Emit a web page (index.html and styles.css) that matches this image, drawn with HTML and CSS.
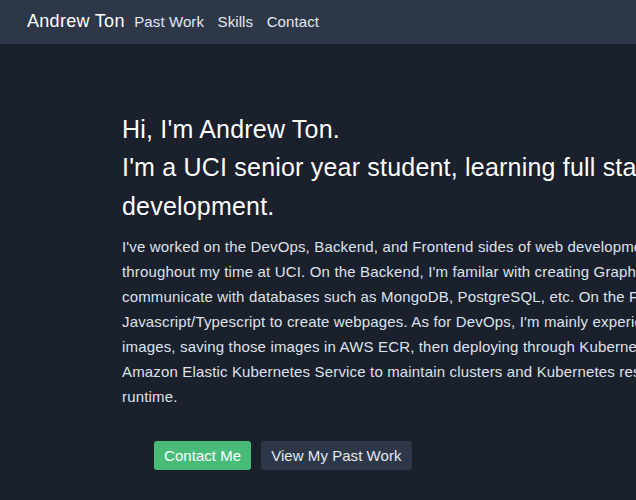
FILE: index.html
```html
<!DOCTYPE html>
<html lang="en">
<head>
<meta charset="utf-8">
<title>Andrew Ton</title>
<link rel="stylesheet" href="styles.css">
</head>
<body>
<nav class="navbar">
  <a class="brand" href="#">Andrew Ton</a>
  <a class="nav-link" href="#">Past Work</a>
  <a class="nav-link" href="#">Skills</a>
  <a class="nav-link" href="#">Contact</a>
</nav>
<main class="hero">
  <h1 class="hero-title">Hi, I'm Andrew Ton.<br>I'm a UCI senior year student, learning full stack<br>development.</h1>
  <p class="hero-text">I've worked on the DevOps, Backend, and Frontend sides of web development<br>throughout my time at UCI. On the Backend, I'm familar with creating GraphQL APIs to<br>communicate with databases such as MongoDB, PostgreSQL, etc. On the Frontend, I use React and<br>Javascript/Typescript to create webpages. As for DevOps, I'm mainly experienced with building Docker<br>images, saving those images in AWS ECR, then deploying through Kubernetes. I've also used<br>Amazon Elastic Kubernetes Service to maintain clusters and Kubernetes resources during<br>runtime.</p>
  <div class="actions">
    <a class="btn btn-primary" href="#">Contact Me</a>
    <a class="btn btn-secondary" href="#">View My Past Work</a>
  </div>
</main>
</body>
</html>
```

FILE: styles.css
```css
html, body {
  margin: 0;
  padding: 0;
  overflow: hidden;
}
body {
  background: #1a202c;
  font-family: "Liberation Sans", Arial, sans-serif;
  color: #e2e8f0;
  min-height: 500px;
}
a { text-decoration: none; }

.navbar {
  box-sizing: border-box;
  height: 44px;
  background: #2d3748;
  display: flex;
  align-items: baseline;
  padding: 11px 0 0 27px;
  gap: 13.5px;
}
.brand {
  color: #ffffff;
  font-size: 18px;
  letter-spacing: 0.3px;
  margin-right: -4px;
}
.nav-link {
  color: #e2e8f0;
  font-size: 15px;
  letter-spacing: 0.1px;
}

.hero {
  padding: 66px 0 0 122px;
  width: 800px;
}
.hero-title {
  margin: 0;
  font-size: 25px;
  font-weight: normal;
  line-height: 38.4px;
  letter-spacing: 0.2px;
  color: #ffffff;
  white-space: nowrap;
}
.hero-text {
  margin: 9px 0 0;
  font-size: 15px;
  line-height: 25px;
  letter-spacing: 0.16px;
  color: #dde3ec;
  white-space: nowrap;
}
.actions {
  display: flex;
  gap: 10px;
  margin-top: 32px;
  padding-left: 32px;
}
.btn {
  display: inline-flex;
  align-items: center;
  height: 29px;
  padding: 0 10px;
  border-radius: 3px;
  font-size: 15px;
  letter-spacing: 0.05px;
}
.btn-primary {
  background: #48bb78;
  color: #ffffff;
}
.btn-secondary {
  background: #2d3748;
  color: #e2e8f0;
}
```
